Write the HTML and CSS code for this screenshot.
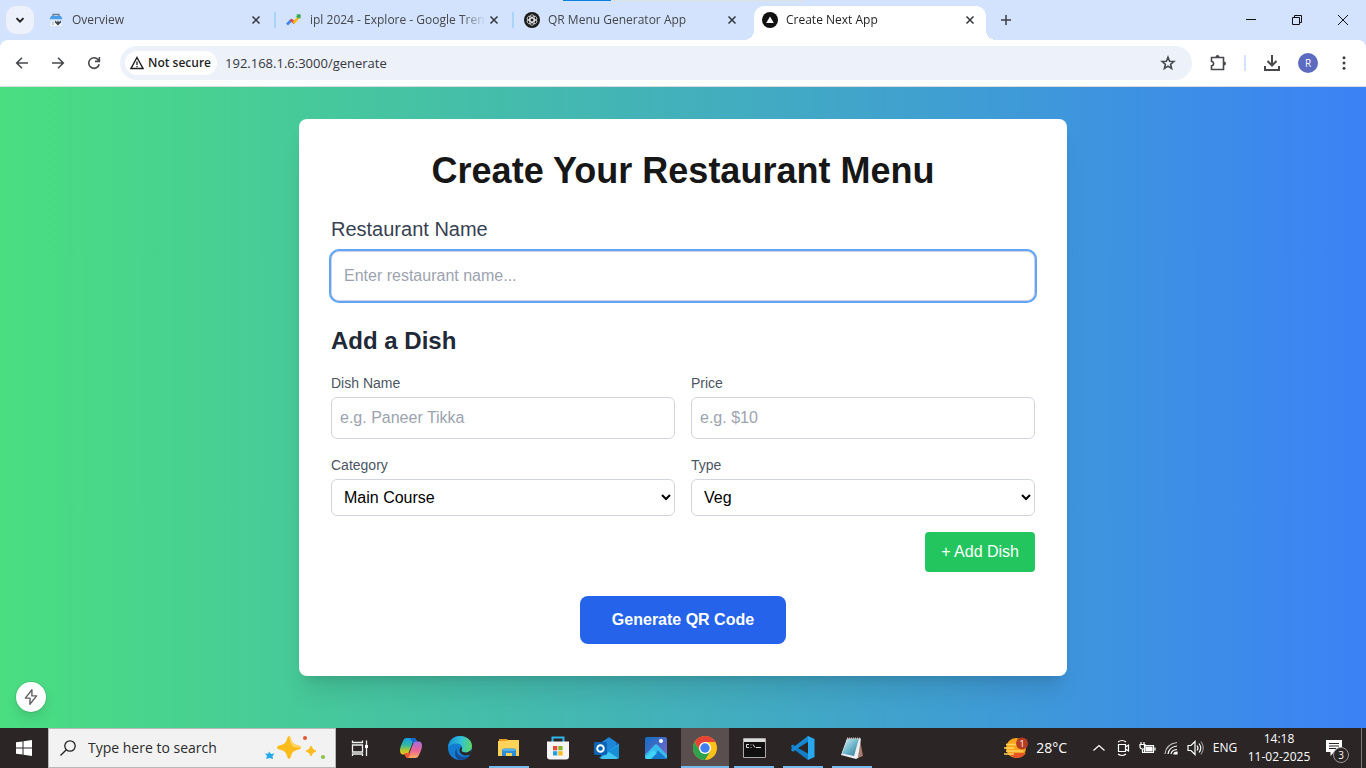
FILE: index.html
```html
<!DOCTYPE html>
<html lang="en">
<head>
    <meta charset="UTF-8">
    <meta name="viewport" content="width=device-width, initial-scale=1.0">
    <title>Create Next App</title>
    <link rel="stylesheet" href="styles.css">
</head>
<body>
    <header class="browser">
        <div class="loading"><span></span></div>
        <div class="tab-strip">
            <button class="tab-search" aria-label="Search tabs">
                <svg width="12" height="12" viewBox="0 0 12 12"><path d="M2.500 4.200 6 7.700l3.500-3.500" fill="none" stroke="#1f1f1f" stroke-width="1.900"/></svg>
            </button>
            <div class="tab">
                <svg width="16" height="16" viewBox="0 0 16 16">
                    <path d="M5 4V2.500h6V4" fill="none" stroke="#5f7f95" stroke-width="1.300"/>
                    <path d="M3 4h10l1.500 3.500h-13z" fill="#4a9de8"/>
                    <path d="M2.500 8h11v6h-11z" fill="#f3f5f7"/>
                    <path d="M1.500 7h13v1.500h-13z" fill="#bcd9f4"/>
                    <path d="M4 9.500h2V13H4z" fill="#c4cdd5"/>
                    <path d="M7 8.500l2 1.500 1-1.500 1 1.500 2-1.500v2L10 13.500 7 10.500z" fill="#3c4650"/>
                </svg>
                <span class="tab-title">Overview</span>
                <button class="tab-close" aria-label="Close tab"><svg width="10" height="10" viewBox="0 0 10 10"><path d="M1.500 1.500l7 7M8.500 1.500l-7 7"/></svg></button>
            </div>
            <div class="tab">
                <svg width="16" height="16" viewBox="0 0 16 16" fill="none" stroke-width="2.600">
                    <path d="M1 12.500 5.500 8" stroke="#4285f4"/>
                    <path d="M4.800 7.500 8.500 11" stroke="#ea4335"/>
                    <path d="M7.500 11 12.500 5.500" stroke="#fbbc04"/>
                    <path d="M10 2.500h4.500V7z" fill="#34a853"/>
                    <path d="M11 5.500 14 3" stroke="#34a853"/>
                </svg>
                <span class="tab-title">ipl 2024 - Explore - Google Tren</span>
                <button class="tab-close" aria-label="Close tab"><svg width="10" height="10" viewBox="0 0 10 10"><path d="M1.500 1.500l7 7M8.500 1.500l-7 7"/></svg></button>
            </div>
            <div class="tab">
                <svg width="16" height="16" viewBox="0 0 16 16">
                    <circle cx="8" cy="8" r="8" fill="#1a1a1a"/>
                    <g fill="none" stroke="#e4e4e4" stroke-width=".8">
                        <rect x="5.800" y="2.700" width="4.400" height="7.600" rx="2.200"/>
                        <rect x="5.800" y="2.700" width="4.400" height="7.600" rx="2.200" transform="rotate(60 8 8)"/>
                        <rect x="5.800" y="2.700" width="4.400" height="7.600" rx="2.200" transform="rotate(120 8 8)"/>
                        <rect x="5.800" y="2.700" width="4.400" height="7.600" rx="2.200" transform="rotate(180 8 8)"/>
                        <rect x="5.800" y="2.700" width="4.400" height="7.600" rx="2.200" transform="rotate(240 8 8)"/>
                        <rect x="5.800" y="2.700" width="4.400" height="7.600" rx="2.200" transform="rotate(300 8 8)"/>
                    </g>
                </svg>
                <span class="tab-title">QR Menu Generator App</span>
                <button class="tab-close" aria-label="Close tab"><svg width="10" height="10" viewBox="0 0 10 10"><path d="M1.500 1.500l7 7M8.500 1.500l-7 7"/></svg></button>
            </div>
            <div class="tab active">
                <svg width="16" height="16" viewBox="0 0 16 16"><circle cx="8" cy="8" r="8" fill="#111"/><path d="M8 4.500 11.800 11H4.200z" fill="#fff"/></svg>
                <span class="tab-title">Create Next App</span>
                <button class="tab-close" aria-label="Close tab"><svg width="10" height="10" viewBox="0 0 10 10"><path d="M1.500 1.500l7 7M8.500 1.500l-7 7"/></svg></button>
            </div>
            <button class="new-tab" aria-label="New tab"><svg width="12" height="12" viewBox="0 0 12 12"><path d="M6 1v10M1 6h10" stroke="#3c3f43" stroke-width="1.500"/></svg></button>
            <div class="window-controls">
                <button aria-label="Minimize"><svg width="10" height="10" viewBox="0 0 10 10"><path d="M0 4.500h10" /></svg></button>
                <button aria-label="Restore"><svg width="10" height="10" viewBox="0 0 10 10"><path d="M.5 2.500h7v7h-7zM2.500 2.500v-2h7v7h-2"/></svg></button>
                <button aria-label="Close"><svg width="10" height="10" viewBox="0 0 10 10"><path d="M0 0l10 10M10 0 0 10"/></svg></button>
            </div>
        </div>
        <div class="toolbar">
            <button class="tool" aria-label="Back"><svg width="16" height="16" viewBox="0 0 16 16"><path d="M14 8H3M8 2.700 2.700 8 8 13.300"/></svg></button>
            <button class="tool" aria-label="Forward"><svg width="16" height="16" viewBox="0 0 16 16"><path d="M2 8h11M8 2.700 13.300 8 8 13.300"/></svg></button>
            <button class="tool" aria-label="Reload"><svg width="16" height="16" viewBox="0 0 16 16"><path d="M13.200 9.200A5.300 5.300 0 1 1 12 4.500L13.300 6M13.400 2v4.400H9"/></svg></button>
            <div class="omnibox">
                <button class="security">
                    <svg width="14" height="14" viewBox="0 0 14 14"><path d="M7 1.500 13 12.500H1z" fill="none" stroke="#1f1f1f" stroke-width="1.400"/><path d="M7 5.500v3.500M7 10v1.300" stroke="#1f1f1f" stroke-width="1.300"/></svg>
                    Not secure
                </button>
                <input class="url" type="text" aria-label="Address" value="192.168.1.6:3000/generate">
                <button class="tool" aria-label="Bookmark"><svg width="16" height="16" viewBox="0 0 16 16"><path d="M8 2.200 9.600 6.200l4.300.3-3.300 2.800 1 4.200L8 11.200l-3.600 2.300 1-4.200-3.300-2.800 4.300-.3z"/></svg></button>
            </div>
            <div class="tools">
                <button class="tool" aria-label="Extensions"><svg width="18" height="18" viewBox="0 0 18 18"><path d="M2.500 3.500h12v12h-12v-3.800a2.100 2.100 0 0 0 0-4.200z"/><path class="solid" d="M6.500 3a2 2 0 0 1 4 0zM15 7.500a2 2 0 0 1 0 4z"/></svg></button>
                <span class="tool-divider"></span>
                <button class="tool" aria-label="Downloads"><svg width="18" height="18" viewBox="0 0 18 18"><path class="thick" d="M9 1v10.500M4.500 7 9 11.500 13.500 7M2 12v4h14v-4"/></svg></button>
                <button class="tool" aria-label="Profile"><span class="avatar">R</span></button>
                <button class="tool" aria-label="Menu"><svg width="16" height="16" viewBox="0 0 16 16"><g fill="#3c3f43"><circle cx="8" cy="2.700" r="1.500"/><circle cx="8" cy="8" r="1.500"/><circle cx="8" cy="13.300" r="1.500"/></g></svg></button>
            </div>
        </div>
    </header>

    <main class="page">
        <form class="card">
            <h1>Create Your Restaurant Menu</h1>
            <div class="restaurant">
                <label for="restaurant">Restaurant Name</label>
                <input id="restaurant" type="text" placeholder="Enter restaurant name...">
            </div>
            <h2>Add a Dish</h2>
            <div class="dish-grid">
                <div class="field">
                    <label for="dish">Dish Name</label>
                    <input id="dish" type="text" placeholder="e.g. Paneer Tikka">
                </div>
                <div class="field">
                    <label for="price">Price</label>
                    <input id="price" type="text" placeholder="e.g. $10">
                </div>
                <div class="field">
                    <label for="category">Category</label>
                    <select id="category">
                        <option>Main Course</option>
                    </select>
                </div>
                <div class="field">
                    <label for="type">Type</label>
                    <select id="type">
                        <option>Veg</option>
                    </select>
                </div>
            </div>
            <button type="button" class="add-dish">+ Add Dish</button>
            <button type="button" class="generate">Generate QR Code</button>
        </form>
        <button class="dev-indicator" aria-label="Static route">
            <svg width="18" height="18" viewBox="0 0 16 16"><path d="M8.800 1.500 3 9h4.200L7 14.500 13 7H8.800z" fill="none" stroke="#666" stroke-width="1.300" stroke-linejoin="round"/></svg>
        </button>
    </main>

    <footer class="taskbar">
        <button class="start" aria-label="Start"><svg width="16" height="16" viewBox="0 0 16 16" fill="#fff"><path d="M0 2.300 6.500 1.400v6.100H0zM7.500 1.200 16 0v7.500H7.500zM0 8.500h6.500v6.100L0 13.700zM7.500 8.500H16V16l-8.500-1.200z"/></svg></button>
        <div class="search">
            <svg width="16" height="16" viewBox="0 0 16 16" fill="none" stroke="#222" stroke-width="1.300"><circle cx="10" cy="6" r="5.200"/><path d="M6.300 9.700.5 15.500"/></svg>
            <input type="text" aria-label="Search" placeholder="Type here to search">
            <svg width="62" height="28" viewBox="0 0 62 28">
                <path d="M24 2q1.500 0 2 3 1 5 6 6 4 .8 4 2.500T32 16q-5 1-6 6-.5 3-2 3t-2-3q-1-5-6-6-4-.8-4-2.500T16 11q5-1 6-6 .5-3 2-3z" fill="#fbbc1b"/>
                <path d="M24 2q1.500 0 2 3 1 5 6 6 4 .8 4 2.500h-6Q25 12 24 2z" fill="#fdd467"/>
                <path d="M46 12q.8 4 5 5-4.200 1-5 5-.8-4-5-5 4.200-1 5-5z" fill="#fbbc1b" stroke="#fbbc1b"/>
                <path d="M4 17.500 6 20l3.500-.5L7.500 22 8 25l-3.500-1L1 25l1-3-2-2.500 3.200.2z" fill="#24a9ec"/>
                <circle cx="40" cy="4" r="2" fill="#e2552d"/><circle cx="58" cy="23" r="2.100" fill="#8bc34a"/>
            </svg>
        </div>
        <button class="task-view" aria-label="Task view"><svg width="18" height="18" viewBox="0 0 18 18" fill="none" stroke="#eee" stroke-width="1.300"><path d="M1.500 6h10v7h-10zM1.500 1.500v2h10v-2M1.500 17v-2h10v2M15.500 1.500V17"/><path d="M14 6h3v3h-3z" fill="#fff" stroke="none"/></svg></button>
        <nav class="apps">
            <button aria-label="Copilot">
                <svg width="24" height="24" viewBox="0 0 24 24">
                    <defs>
                        <linearGradient id="cpLeft" x1="0" y1="0" x2="0" y2="1"><stop offset="0" stop-color="#159de5"/><stop offset=".45" stop-color="#35b9a0"/><stop offset=".75" stop-color="#b5c72b"/><stop offset="1" stop-color="#f4bc24"/></linearGradient>
                        <linearGradient id="cpRight" x1="0" y1="0" x2="0" y2="1"><stop offset="0" stop-color="#a56ddf"/><stop offset=".55" stop-color="#ee6596"/><stop offset="1" stop-color="#ffac61"/></linearGradient>
                    </defs>
                    <path d="M7 2h8q2 0 2.700 3l.8 2h-5L10 16q-1 2.500-3 2.500H4Q1 18.500 1 14q0-3 3-9 1-3 3-3z" fill="url(#cpLeft)"/>
                    <path d="M11 2h4q2 0 2.700 3l.8 2h-4.800z" fill="#1769cf"/>
                    <path d="M17 22H9q-2 0-2.700-3l-.8-2h5L14 8q1-2.500 3-2.500h3q3 0 3 4.500 0 3-3 9-1 3-3 3z" fill="url(#cpRight)"/>
                    <path d="M5.500 17h6l-1 3q-.7 2-2.500 2-1.500-.5-2-3z" fill="#ef5635"/>
                </svg>
            </button>
            <button aria-label="Edge">
                <svg width="24" height="24" viewBox="0 0 24 24">
                    <defs><linearGradient id="edgeTop" x1="0" y1=".3" x2="1" y2=".4"><stop offset="0" stop-color="#1690db"/><stop offset=".55" stop-color="#32c1d5"/><stop offset="1" stop-color="#5ed663"/></linearGradient></defs>
                    <circle cx="12" cy="12" r="12" fill="#127cd1"/>
                    <path d="M0 11.500C.5 4.500 5.500 0 12 0c7 0 12 4.500 12 10 0 4-3 6.500-7 6.500-3 0-4.200-1-3.400-2.500 2-3.500-.8-6.500-5-6.500C5 7.500 1.500 9 0 11.500z" fill="url(#edgeTop)"/>
                    <path d="M8.700 12.500c-1 5 3.300 8.500 8.300 8.500 2.300 0 4-.9 5-1.500-2 3-5.500 4.500-9.500 4.500C7 23.500 5.500 16 8.700 12.500z" fill="#174b96"/>
                    <path d="M13 11c2 1.500.2 3 .7 4 .8 1.600 5.300 2.300 8 0L24 14l-1.500 4.500L20 19c-6 2-11-4-7-8z" fill="#2b2626"/>
                </svg>
            </button>
            <button class="open" aria-label="File Explorer">
                <svg width="22" height="20" viewBox="0 0 22 20"><path d="M1 1h8l2 2.500H1z" fill="#e89a22"/><path d="M0 3h8.500l1.500-1h11v16H0z" fill="#ffd35a"/><path d="M4 18v-5.500q0-2 2-2h10q2 0 2 2V18h-4v-3H8v3z" fill="#2f8ed8"/><path d="M5 11h12v2H5z" fill="#54b0ec"/></svg>
            </button>
            <button aria-label="Store">
                <svg width="24" height="24" viewBox="0 0 24 24"><path d="M6.500 7V1.500h11V7" fill="none" stroke="#30b5e8" stroke-width="2"/><path d="M1 5.500h22v15q0 3-3 3H4q-3 0-3-3z" fill="#f5f5f5"/><path d="M7 10h4.300v4.300H7z" fill="#e64c34"/><path d="M12.300 10h4.300v4.300h-4.300z" fill="#83b72f"/><path d="M7 15.200h4.300v4.300H7z" fill="#249fe0"/><path d="M12.300 15.200h4.300v4.300h-4.300z" fill="#fbb819"/></svg>
            </button>
            <button aria-label="Outlook">
                <svg width="26" height="24" viewBox="0 0 26 24"><path d="M5 8 15 1l10 7v13q0 2-2 2H8z" fill="#176bbd"/><path d="M8 6 15 1.500 22 6v7l-7 4-7-4z" fill="#1f86d6"/><path d="m25 8-10 7 10 7z" fill="#29b6ed"/><path d="M5 21.500 25 9v12q0 2-2 2H8z" fill="#168ed6"/><path d="m6 22 9-6 9 6-2 1H8z" fill="#42c7f2"/><rect y="6" width="13" height="13" rx="1.500" fill="#0b64b8"/><circle cx="6.500" cy="12.500" r="3.300" fill="none" stroke="#fff" stroke-width="1.900"/></svg>
            </button>
            <button aria-label="Photos">
                <svg width="22" height="22" viewBox="0 0 22 22"><defs><linearGradient id="photoSky" x2="1" y2="1"><stop stop-color="#0f6ec3"/><stop offset="1" stop-color="#8366c8"/></linearGradient></defs><rect width="22" height="22" rx="2" fill="url(#photoSky)"/><path d="M0 18 9.500 8q1.500-1.500 3 0L22 18v2q0 2-2 2H2q-2 0-2-2z" fill="#35bdee"/><path d="M4 22 13 13.500 22 22z" fill="#1679cf"/><path d="m0 21 8-8 4 3-6 6H2z" fill="#42d4f5"/><circle cx="16" cy="4" r="2" fill="#fff"/></svg>
            </button>
            <button class="open current" aria-label="Chrome">
                <svg width="24" height="24" viewBox="0 0 24 24"><circle cx="12" cy="12" r="12" fill="#fbc116"/><path d="M1.600 6A12 12 0 0 1 22.400 6H12L6.800 15z" fill="#e54335"/><path d="M1.600 6A12 12 0 0 0 12 24l5.200-9-5.200 3-5.200-3z" fill="#2da14e"/><circle cx="12" cy="12" r="6" fill="#fff"/><circle cx="12" cy="12" r="4.700" fill="#3f7ff0"/></svg>
            </button>
            <button class="open" aria-label="Command Prompt">
                <svg width="23" height="20" viewBox="0 0 23 20"><path d="M.5.5h22v19H.5z" fill="#101010" stroke="#aaa"/><path d="M1 1h21v3H1z" fill="#ddd"/><path d="M6 6.500H3.500v3H6M8 6.500v.8M8 9v.8M10 6.500l2 3M13 9.500h5" fill="none" stroke="#ddd"/></svg>
            </button>
            <button class="open" aria-label="Visual Studio Code">
                <svg width="24" height="24" viewBox="0 0 24 24"><path d="M17 0 5.500 11.500 2 8.500.3 9.500v2L17 24v-6.500L7 12l10-6z" fill="#147dc5"/><path d="m.3 14.500 1.700 1.300L17 4V0L.3 12.700z" fill="#168ad3"/><path d="m17 0 6.500 3v18L17 24z" fill="#28a9ef"/></svg>
            </button>
            <button class="open" aria-label="Notepad">
                <svg width="24" height="24" viewBox="0 0 24 24"><defs><linearGradient id="note" x2="1" y2="1"><stop stop-color="#d9f4f7"/><stop offset=".5" stop-color="#70b8cd"/><stop offset="1" stop-color="#2f718b"/></linearGradient></defs><path d="m20 4 3 16-5 2z" fill="#a77b6b"/><path d="M7 2.500h14L18 22l-2 1-15-4z" fill="#eceef0"/><path d="M7.500 3h11.300L14 20 2 17.500z" fill="url(#note)"/><path d="M7 2.500h14" stroke="#bbb" stroke-width="2" stroke-dasharray="1 1"/></svg>
            </button>
        </nav>
        <div class="tray">
            <button class="weather">
                <svg width="24" height="22" viewBox="0 0 24 22"><circle cx="12" cy="11" r="10" fill="#f9a51d"/><path d="M5 16h17q-3 5-9 5-5 0-8-5z" fill="#e65324"/><path d="M2 7.500h12M0 11h10M2 14h17M0 17h10" stroke="#ffd55c" stroke-width="1.700"/><circle cx="18" cy="6.500" r="6" fill="#b63b23"/><text x="18" y="10" text-anchor="middle" class="weather-badge">1</text></svg>
                28°C
            </button>
            <button class="tray-icon" aria-label="Show hidden icons"><svg width="14" height="14" viewBox="0 0 14 14"><path d="m1.500 9.500 5.500-5 5.500 5"/></svg></button>
            <button class="tray-icon" aria-label="Meet now"><svg width="16" height="18" viewBox="0 0 16 18"><path d="M3.500 5.500h7v7h-7zM10.500 8l3-2v6l-3-2M3 3q4-3 8 0M3 15q4 3 8 0"/></svg></button>
            <button class="tray-icon" aria-label="Battery"><svg width="17" height="14" viewBox="0 0 17 14"><path d="M5.500 4.500h9v7h-9zM16 6.500v3M3.500 8v3.500h2M1 3.500h5v2Q6 8 3.500 8T1 5.500zM2 1v2M5 1v2"/><path class="solid" d="M7 6h6v4H7z"/></svg></button>
            <button class="tray-icon" aria-label="Wi-Fi"><svg width="15" height="14" viewBox="0 0 15 14"><path d="M1 13Q2 3 13 1.500" opacity=".7"/><path d="M4 13q1-7 9-8M7 13q.5-4 6-4.500"/><path class="solid" d="M10 13q0-2 3-2v2z"/></svg></button>
            <button class="tray-icon" aria-label="Volume"><svg width="17" height="16" viewBox="0 0 17 16"><path d="M1 5.500h3l4-4v13l-4-4H1zM10 5.500q2 2.500 0 5M12 3.500q3.500 4.500 0 9"/><path d="M14 1.500q4.500 6.500 0 13" opacity=".5"/></svg></button>
            <button class="language">ENG</button>
            <div class="clock"><span>14:18</span><span>11-02-2025</span></div>
            <button class="notifications" aria-label="Notifications">
                <svg width="16" height="16" viewBox="0 0 16 16"><path d="M0 0h16v12H8l-3.500 4v-4H0z" fill="#fff"/><path d="M3 3.500h10M3 6h10M3 8.500h7" stroke="#2a2425"/></svg>
                <span class="count">3</span>
            </button>
            <span class="show-desktop"></span>
        </div>
    </footer>
</body>
</html>
```

FILE: styles.css
```css
* {
    box-sizing: border-box;
}

body {
    margin: 0;
    min-height: 100vh;
    display: flex;
    flex-direction: column;
    font-family: "Liberation Sans", Arial, sans-serif;
    font-size: 16px;
    line-height: 24px;
    color: #171717;
}

button, input, select {
    font: inherit;
    color: inherit;
    margin: 0;
}

button {
    border: 0;
    padding: 0;
    background: none;
    display: flex;
    align-items: center;
    justify-content: center;
}

svg {
    display: block;
    flex-shrink: 0;
}

/* Browser window */
.browser {
    position: relative;
    background-color: #d3e2fd;
    font-family: "Open Sans", "Noto Sans", sans-serif;
    font-size: 12px;
    line-height: 16px;
}

.loading {
    position: absolute;
    top: 0;
    left: 563px;
    width: 241px;
    height: 1px;
    background-color: #dfe2e2;
}

.loading span {
    display: block;
    width: 48px;
    height: 1px;
    background-color: #0a7fdc;
}

.tab-strip {
    display: flex;
    height: 40px;
    padding: 6px 0 0 6px;
}

.tab-search {
    width: 28px;
    height: 28px;
    border-radius: 10px;
    background-color: #edf1fb;
    margin-right: 6px;
}

.tab {
    position: relative;
    display: flex;
    align-items: center;
    width: 232px;
    height: 28px;
    padding: 0 8px;
    margin-right: 6px;
    color: #44474b;
}

.tab::after {
    content: "";
    position: absolute;
    right: -4px;
    top: 6px;
    width: 2px;
    height: 16px;
    background-color: #a8d4fa;
}

.tab:nth-child(4)::after {
    display: none;
}

.tab.active {
    height: 34px;
    padding-bottom: 6px;
    border-radius: 10px 10px 0 0;
    background-color: #fff;
    color: #1f1f1f;
    margin-right: 10px;
}

/* curved feet of the active tab */
.tab.active::before, .tab.active::after {
    content: "";
    position: absolute;
    top: auto;
    bottom: 0;
    width: 10px;
    height: 10px;
    background: radial-gradient(circle at 0 0, transparent 10px, #fff 10px);
}

.tab.active::before {
    left: -10px;
}

.tab.active::after {
    right: -10px;
    background: radial-gradient(circle at 100% 0, transparent 10px, #fff 10px);
}

.tab-title {
    flex: 1;
    margin-left: 8px;
    overflow: hidden;
    white-space: nowrap;
    mask-image: linear-gradient(to right, #000 86%, transparent);
}

.tab-close {
    width: 16px;
    height: 16px;
}

.tab-close path {
    stroke: #33363a;
    stroke-width: 1.5;
}

.new-tab {
    width: 20px;
    height: 28px;
}

.window-controls {
    display: flex;
    margin-left: auto;
}

.window-controls button {
    width: 46px;
    height: 28px;
}

.window-controls path {
    fill: none;
    stroke: #111;
}

.toolbar {
    display: flex;
    align-items: center;
    height: 47px;
    padding: 0 4px;
    background-color: #fff;
    border-radius: 8px 8px 0 0;
    border-bottom: 1px solid #dadce0;
}

.tool {
    width: 36px;
    height: 34px;
    flex-shrink: 0;
}

.tool path {
    fill: none;
    stroke: #46484b;
    stroke-width: 1.6;
}

.tool .thick {
    stroke-width: 2;
}

.tool .solid {
    fill: #46484b;
    stroke: none;
}

.omnibox {
    flex: 1;
    display: flex;
    align-items: center;
    height: 34px;
    margin-left: 8px;
    padding: 0 6px 0 5px;
    border-radius: 17px;
    background-color: #edf1fa;
}

.security {
    height: 24px;
    padding: 0 6px 0 5px;
    gap: 4px;
    border-radius: 12px;
    background-color: #fff;
    font-weight: 600;
    color: #1f1f1f;
    white-space: nowrap;
}

.url {
    flex: 1;
    min-width: 0;
    padding: 0 8px;
    border: 0;
    background: none;
    font-size: 13px;
    color: #35373a;
}

.tools {
    display: flex;
    align-items: center;
    padding-left: 8px;
}

.tool-divider {
    width: 2px;
    height: 16px;
    margin: 0 8px;
    background-color: #d3e2fd;
}

.avatar {
    width: 20px;
    height: 20px;
    border-radius: 50%;
    background-color: #5c6bc0;
    color: #fff;
    font-size: 10px;
    line-height: 20px;
}

/* Page */
.page {
    position: relative;
    flex: 1;
    padding: 32px;
    background-image: linear-gradient(to right, #4ade80, #3b82f6);
}

.card {
    display: flex;
    flex-direction: column;
    max-width: 768px;
    margin: 0 auto;
    padding: 32px;
    border-radius: 8px;
    background-color: #fff;
    box-shadow: 0 20px 25px -5px rgba(0, 0, 0, 0.1), 0 8px 10px -6px rgba(0, 0, 0, 0.1);
}

h1 {
    margin: 0 0 24px;
    text-align: center;
    font-size: 36px;
    line-height: 40px;
}

h2 {
    margin: 0 0 16px;
    font-size: 24px;
    line-height: 32px;
    color: #1f2937;
}

.card label {
    display: block;
}

.card input, .card select {
    display: block;
    width: 100%;
    border: 1px solid #d1d5db;
    border-radius: 6px;
    background-color: #fff;
}

.card input::placeholder {
    color: #9ca3af;
}

.restaurant {
    margin-bottom: 24px;
}

.restaurant label {
    margin-bottom: 8px;
    font-size: 20px;
    line-height: 28px;
    color: #374151;
}

.restaurant input {
    padding: 12px;
    border-radius: 8px;
    box-shadow: 0 0 0 2px #60a5fa;
}

.dish-grid {
    display: grid;
    grid-template-columns: 1fr 1fr;
    gap: 16px;
}

.field label {
    margin-bottom: 4px;
    font-size: 14px;
    line-height: 20px;
    color: #4b5563;
}

.field input {
    padding: 8px;
}

.field select {
    height: 37px;
    padding: 8px;
    line-height: normal;
    color: #000;
}

.add-dish {
    align-self: flex-end;
    margin-top: 16px;
    padding: 8px 16px;
    border-radius: 4px;
    background-color: #22c55e;
    color: #fff;
}

.generate {
    align-self: center;
    margin-top: 24px;
    padding: 12px 32px;
    border-radius: 8px;
    background-color: #2563eb;
    color: #fff;
    font-weight: bold;
}

.dev-indicator {
    position: absolute;
    left: 16px;
    bottom: 16px;
    width: 30px;
    height: 30px;
    border-radius: 50%;
    background-color: #fff;
    box-shadow: 0 0 0 1px rgba(0, 0, 0, 0.08), 0 6px 12px rgba(0, 0, 0, 0.1);
}

/* Windows taskbar */
.taskbar {
    display: flex;
    height: 40px;
    background-color: #2b2526;
    color: #fff;
    font-family: "Open Sans", "Noto Sans", sans-serif;
    font-size: 12px;
    line-height: 18px;
}

.start, .task-view {
    width: 48px;
}

.search {
    display: flex;
    align-items: center;
    width: 288px;
    padding: 0 8px 0 11px;
    border: 1px solid #b8b8b8;
    background-color: #f2f2f2;
}

.search input {
    flex: 1;
    min-width: 0;
    padding: 0 12px;
    border: 0;
    background: none;
    font-size: 14px;
}

.search input::placeholder {
    color: #2b2b2b;
}

.apps {
    display: flex;
    gap: 1px;
    margin-left: 3px;
}

.apps button {
    position: relative;
    width: 48px;
}

.apps .current {
    background-color: #5a4e4f;
}

.apps .open::after {
    content: "";
    position: absolute;
    left: 4px;
    right: 4px;
    bottom: 0;
    height: 2px;
    background-color: #76b9ed;
}

.apps .current::after {
    left: 0;
    right: 0;
}

.tray {
    display: flex;
    align-items: center;
    margin-left: auto;
}

.weather {
    gap: 8px;
    margin-right: 20px;
    font-size: 14px;
}

.weather-badge {
    font-size: 9px;
    fill: #fff;
}

.tray-icon {
    width: 24px;
    height: 40px;
}

.tray-icon path {
    fill: none;
    stroke: #fff;
    stroke-width: 1.2;
}

.tray-icon .solid {
    fill: #fff;
}

.language {
    width: 36px;
}

.clock {
    display: flex;
    flex-direction: column;
    width: 72px;
    text-align: center;
}

.notifications {
    position: relative;
    width: 38px;
    height: 40px;
}

.count {
    position: absolute;
    left: 18px;
    top: 19px;
    width: 16px;
    height: 16px;
    border: 1px solid #999;
    border-radius: 50%;
    background-color: #2b2526;
    font-size: 10px;
    line-height: 14px;
}

.show-desktop {
    width: 5px;
    height: 40px;
    margin-left: 8px;
    border-left: 1px solid #777;
}
```
